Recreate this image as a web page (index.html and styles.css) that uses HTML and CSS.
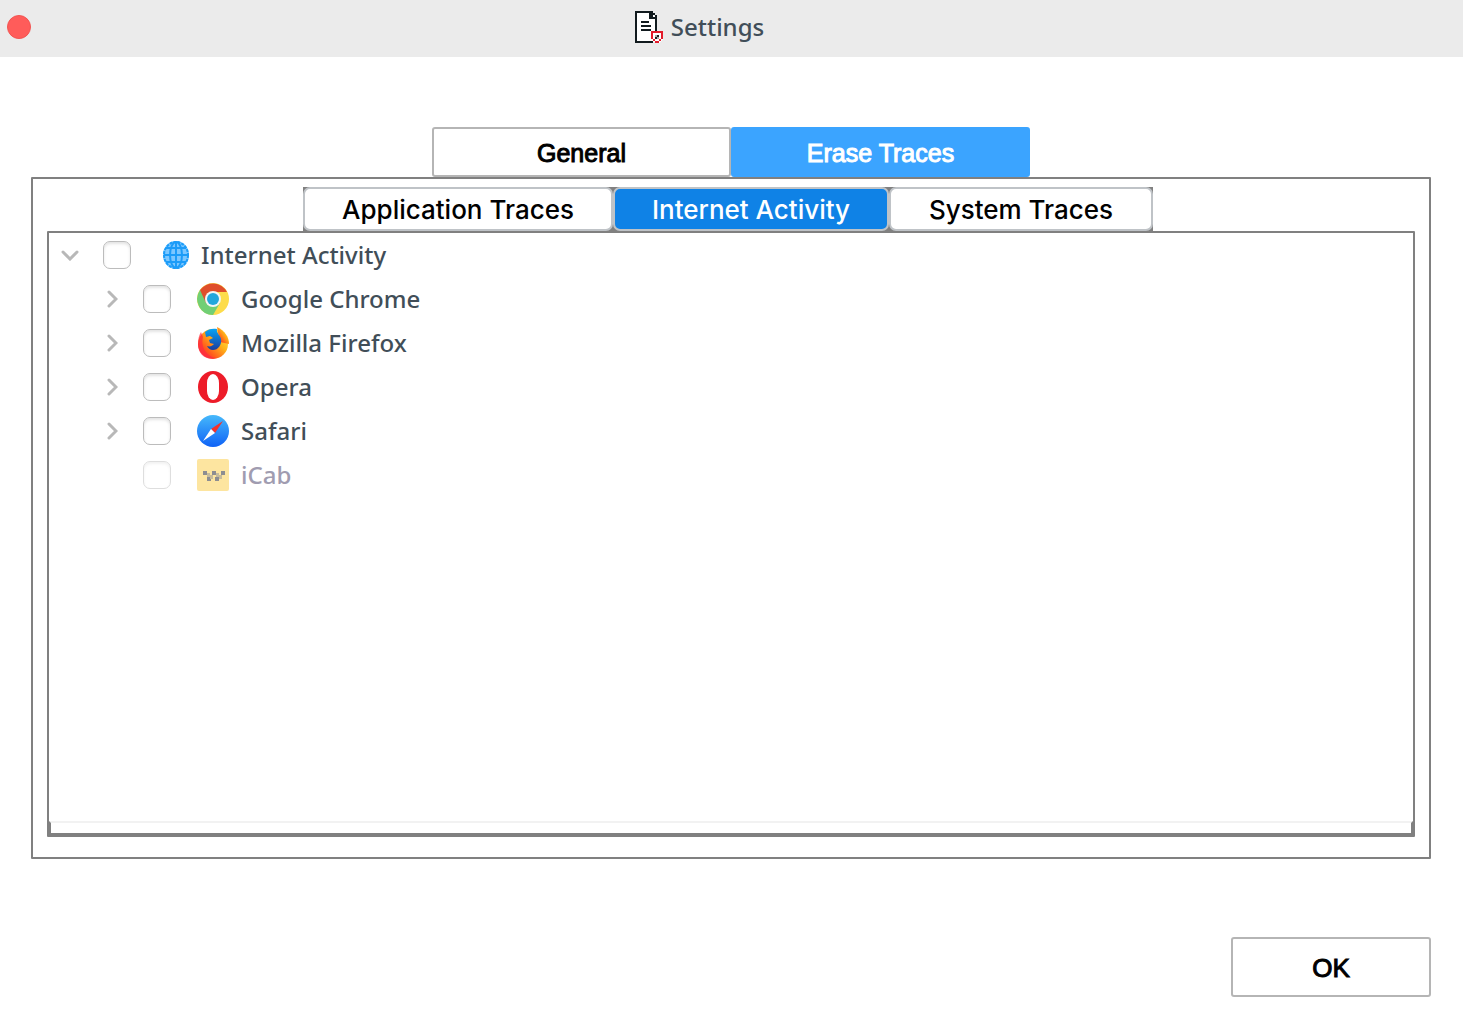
FILE: index.html
```html
<!DOCTYPE html>
<html lang="en">
<head>
<meta charset="utf-8">
<title>Settings</title>
<link rel="stylesheet" href="styles.css">
</head>
<body>
<header class="titlebar">
  <button class="close" aria-label="Close"></button>
  <h1 class="title">
    <svg class="title-icon" width="28" height="32" viewBox="0 0 28 32" shape-rendering="crispEdges" aria-hidden="true">
      <path fill="#fff" d="M1 1h14l6 6v24H1z"/>
      <path fill="#111a1e" d="M0 0h18v2h2v2h-2v2h2V4h2v16h-2V8h-6V2H2v28h16v2H0zM6 10h8v2H6zM6 14h10v2H6zM6 18h10v2H6z"/>
      <path fill="#fff" d="M16 20h12v8l-4 4h-4l-4-4z"/>
      <path fill="#e31b2b" d="M16 20h12v8h-2v-6h-8v6h-2zM18 28h2v2h-2zM20 30h4v2h-4zM24 28h2v2h-2z"/>
      <path fill="#222" d="M22 24h2v2h-2zM20 26h2v2h-2z"/>
      <path fill="#aaa" d="M20 24h2v2h-2zM22 26h2v2h-2z"/>
    </svg>
    <span>Settings</span>
  </h1>
</header>
<main class="content">
  <nav class="tabs">
    <button class="tab">General</button>
    <button class="tab tab-active">Erase Traces</button>
  </nav>
  <section class="panel">
    <nav class="subtabs">
      <button class="subtab subtab-wide">Application Traces</button>
      <button class="subtab subtab-active">Internet Activity</button>
      <button class="subtab subtab-narrow">System Traces</button>
    </nav>
    <div class="tree-box">
      <ul class="tree">
        <li>
          <div class="row">
            <button class="toggle" aria-label="Collapse"><svg width="18" height="12" viewBox="0 0 18 12"><path d="M2 3l7 7 7-7"/></svg></button>
            <input class="check" type="checkbox" id="all">
            <label class="item item-root" for="all">
              <svg width="26" height="28" viewBox="0 0 26 28">
                <ellipse cx="13" cy="14" rx="13" ry="14" fill="#7cc7ff"/>
                <g fill="none" stroke="#1c9cf8" stroke-width="2"><ellipse cx="13" cy="14" rx="12" ry="13" stroke-dasharray="3 1"/><ellipse cx="13" cy="14" rx="6" ry="13"/><path d="M13 1v26M1 14h24M3 7h20M3 21h20"/></g>
              </svg>
              <span>Internet Activity</span>
            </label>
          </div>
          <ul class="tree branch">
            <li class="row">
              <button class="toggle" aria-label="Expand"><svg width="12" height="18" viewBox="0 0 12 18"><path d="M3 2l7 7-7 7"/></svg></button>
              <input class="check" type="checkbox" id="chrome">
              <label class="item" for="chrome">
                <svg width="32" height="32" viewBox="0 0 32 32">
                  <circle cx="16" cy="16" r="16" fill="#fddc4b"/>
                  <path fill="#71cf75" d="M16 16L3 7a16 16 0 0 0 13 25l7-12z"/>
                  <path fill="#df4e2b" d="M16 16L9 20 3 7a16 16 0 0 1 27 2H16z"/>
                  <circle cx="16" cy="16" r="8" fill="#f3f6f5"/><circle cx="16" cy="16" r="6" fill="#22a7dc"/>
                </svg>
                <span>Google Chrome</span>
              </label>
            </li>
            <li class="row">
              <button class="toggle" aria-label="Expand"><svg width="12" height="18" viewBox="0 0 12 18"><path d="M3 2l7 7-7 7"/></svg></button>
              <input class="check" type="checkbox" id="firefox">
              <label class="item" for="firefox">
                <svg width="32" height="32" viewBox="0 0 32 32">
                  <defs>
                    <linearGradient id="fire" x1="1" y1="0" x2="0" y2="1"><stop offset="0" stop-color="#fff35a"/><stop offset=".4" stop-color="#ffb219"/><stop offset=".7" stop-color="#ff5a1c"/><stop offset="1" stop-color="#f0105c"/></linearGradient>
                    <linearGradient id="globe" x1="0" y1="0" x2="0" y2="1"><stop offset="0" stop-color="#08a4f5"/><stop offset="1" stop-color="#1a3d9e"/></linearGradient>
                  </defs>
                  <circle cx="16" cy="17" r="15" fill="url(#fire)"/>
                  <path fill="url(#fire)" d="M20 0c8 4 12 10 12 17l-9-2z"/>
                  <path fill="url(#globe)" d="M8 5c3-3 8-4 12-3-1 4 3 6 4 10 1 6-3 11-8 11-3 0-5-2-6-4 3 1 5 0 7-2l-4-1-1-3 4-2-3-2-4 1z"/>
                  <path fill="#ff2b3e" d="M1 17c0-5 1-9 3-12l2 5c-2 8 1 14 6 18 2 2 5 3 8 3C8 34 1 27 1 17z" opacity=".7"/>
                </svg>
                <span>Mozilla Firefox</span>
              </label>
            </li>
            <li class="row">
              <button class="toggle" aria-label="Expand"><svg width="12" height="18" viewBox="0 0 12 18"><path d="M3 2l7 7-7 7"/></svg></button>
              <input class="check" type="checkbox" id="opera">
              <label class="item" for="opera">
                <svg width="32" height="32" viewBox="0 0 32 32"><ellipse cx="16" cy="16" rx="15" ry="16" fill="#ed1c29"/><rect x="10" y="3" width="12" height="26" rx="6" ry="9" fill="#fff"/></svg>
                <span>Opera</span>
              </label>
            </li>
            <li class="row">
              <button class="toggle" aria-label="Expand"><svg width="12" height="18" viewBox="0 0 12 18"><path d="M3 2l7 7-7 7"/></svg></button>
              <input class="check" type="checkbox" id="safari">
              <label class="item" for="safari">
                <svg width="32" height="32" viewBox="0 0 32 32">
                  <defs><linearGradient id="sky" x1="0" y1="0" x2="0" y2="1"><stop offset="0" stop-color="#46b9fb"/><stop offset="1" stop-color="#0f62f6"/></linearGradient></defs>
                  <circle cx="16" cy="16" r="16" fill="url(#sky)"/>
                  <path fill="#f5322c" d="M26 6L14 14l4 4z"/><path fill="#fff" d="M6 26l8-12 4 4z"/>
                </svg>
                <span>Safari</span>
              </label>
            </li>
            <li class="row">
              <span class="toggle"></span>
              <input class="check" type="checkbox" id="icab" disabled>
              <label class="item item-disabled" for="icab">
                <svg width="32" height="32" viewBox="0 0 32 32"><rect width="32" height="32" rx="2" fill="#fde5a0"/><path fill="#8d8d91" d="M6 12h4v4H6zM15 12h4v4h-4zM24 12h4v4h-4zM10 18h4v4h-4zM18 18h4v4h-4z"/><path fill="#c7bb9b" d="M10 14h3v4h-3zM13 16h3v4h-3zM19 14h3v4h-3zM22 16h3v4h-3z"/></svg>
                <span>iCab</span>
              </label>
            </li>
          </ul>
        </li>
      </ul>
      <div class="tree-foot"></div>
    </div>
  </section>
  <footer class="actions"><button class="ok">OK</button></footer>
</main>
</body>
</html>
```
FILE: styles.css
```css
* { box-sizing: border-box; }

body {
  display: flex;
  flex-direction: column;
  min-height: 100vh;
  margin: 0;
  background: #fff;
  color: #414e58;
  font: 500 24px/32px "Noto Sans", sans-serif;
}

button { padding: 0; border: 0; background: none; color: inherit; }

.titlebar {
  display: flex;
  align-items: center;
  height: 57px;
  padding: 0 7px;
  background: #ebebeb;
}

.close {
  width: 24px;
  height: 24px;
  margin-bottom: 3px;
  border: 1px solid #f25552;
  border-radius: 50%;
  background: #ff5c5a;
}

.title {
  display: flex;
  flex: 1;
  align-items: center;
  justify-content: center;
  gap: 8px;
  margin: 0;
  padding: 0 88px 3px 0;
  font: inherit;
}

.content {
  display: flex;
  flex: 1;
  flex-direction: column;
  padding: 70px 32px 33px 31px;
}

.tabs { display: flex; justify-content: center; }

.tab, .ok {
  padding-top: 2px;
  border: 2px solid #b5b5b5;
  border-radius: 3px;
  background: #fff;
  color: #000;
  font: 26px/32px "Liberation Sans", Arial, sans-serif;
  -webkit-text-stroke: 1px currentColor;
}

.tab { width: 299px; height: 50px; font-size: 25px; }
.tab-active { border-color: #3ba4ff; background: #3ba4ff; color: #fff; }

.panel {
  display: flex;
  flex: 1;
  flex-direction: column;
  padding: 8px 14px 20px;
  border: 2px solid #808080;
  border-radius: 1px;
}

.subtabs {
  display: flex;
  align-self: center;
  margin-right: 6px;
  background: #808080;
}

.subtab {
  width: 276px;
  height: 44px;
  padding-top: 2px;
  border: 2px solid #bfc3c7;
  border-radius: 7px;
  background: #fff;
  color: #000;
  font: 450 26px/32px Inter, sans-serif;
}

.subtab-wide { width: 310px; }
.subtab-narrow { width: 264px; }
.subtab-active { background: #0f82e6; color: #fff; }

.tree-box {
  display: flex;
  flex: 1;
  flex-direction: column;
  border: 2px solid #808080;
  border-radius: 1px;
}

.tree { flex: 1; margin: 0; padding: 0; list-style: none; }
.branch { padding-left: 40px; }

.row { display: flex; align-items: center; height: 44px; padding-left: 12px; }

.toggle {
  display: flex;
  align-items: center;
  justify-content: center;
  width: 18px;
  height: 32px;
  margin-right: 24px;
}

.branch .toggle { width: 22px; margin-right: 20px; }

.toggle path {
  fill: none;
  stroke: #b8b8b8;
  stroke-width: 3;
  stroke-linecap: round;
}

.check {
  width: 28px;
  height: 28px;
  margin: 0;
  border: 1px solid #bcbcbc;
  border-radius: 7px;
  appearance: none;
  background: #fff;
  box-shadow: inset 0 2px 3px #e4e4e4;
}

.check:disabled { border-color: #dedede; box-shadow: inset 0 2px 3px #f2f2f2; }

.item { display: flex; align-items: center; gap: 12px; margin-left: 26px; }
.item-root { margin-left: 32px; }
.item-disabled { color: #a09cb0; }

.tree-foot {
  height: 14px;
  border: 2px solid #808080;
  border-top-color: #f2f2f2;
}

.actions { display: flex; justify-content: flex-end; padding-top: 78px; }
.ok { width: 200px; height: 60px; }
```
